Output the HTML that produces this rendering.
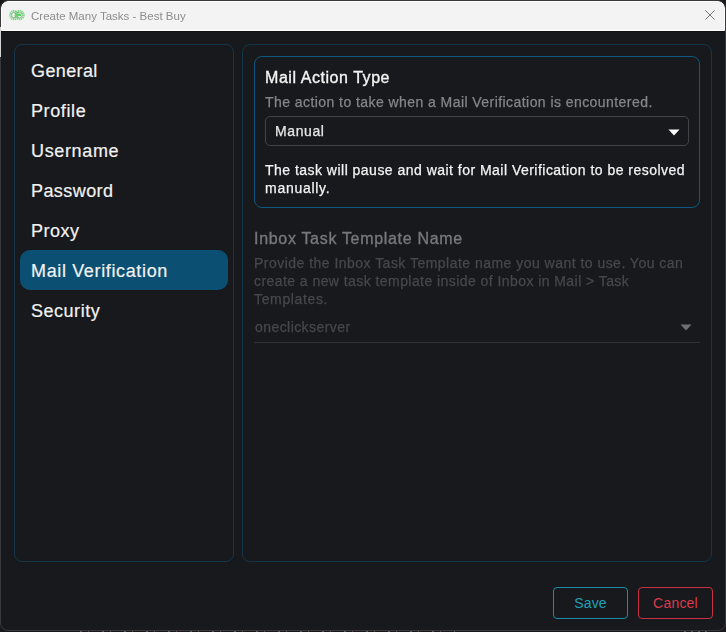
<!DOCTYPE html>
<html><head><meta charset="utf-8"><title>Create Many Tasks - Best Buy</title>
<style>
*{box-sizing:border-box;margin:0;padding:0}
html,body{width:726px;height:632px;overflow:hidden;background:#19191b;font-family:"Liberation Sans",sans-serif;}
.abs{position:absolute;white-space:nowrap}
#win{position:absolute;left:0;top:0;width:726px;height:631px;border:1px solid #39393b;border-radius:8px;background:#18191c;overflow:hidden}
#tb{position:absolute;left:0;top:0;width:724px;height:30px;background:#f3f3f3;border:1px solid #fff;border-radius:7px 7px 0 0}
#title{left:30px;top:8px;font-size:11.5px;line-height:14px;color:#8d8d8d;will-change:transform}
#side{position:absolute;left:13px;top:43px;width:220px;height:518px;border:1px solid #143649;border-radius:8px}
#main{position:absolute;left:241px;top:43px;width:470px;height:518px;border:1px solid #143649;border-radius:8px}
.nav{position:absolute;left:30px;font-size:18px;line-height:22px;color:#f2f2f2;white-space:nowrap;-webkit-text-stroke:0.2px currentColor}
#sel{position:absolute;left:19px;top:249px;width:208px;height:40px;border-radius:10px;background:#0b4f73}
#card{position:absolute;left:253px;top:55px;width:446px;height:152px;border:1px solid #0f5780;border-radius:8px}
.h{font-size:16px;line-height:20px;will-change:transform;-webkit-text-stroke:0.35px currentColor}
.t{font-size:14px;line-height:18px;will-change:transform;-webkit-text-stroke:0.25px currentColor}
#selbox{position:absolute;left:264px;top:115px;width:424px;height:30px;border:1px solid #42444a;border-radius:5px}
.btn{position:absolute;top:586px;width:75px;height:32px;border-radius:4px;font-size:14px;line-height:30px;text-align:center}
#save{left:552px;border:1px solid #1c8ba3;color:#1fa0bb}
#cancel{left:637px;border:1px solid #c93045;color:#dc3a4e}
</style></head><body>
<div id="win">
 <div id="tb"></div>
 <div class="abs" style="left:0;top:30px;width:724px;height:1px;background:#0f1012"></div>
 <svg class="abs" style="left:7.4px;top:7.2px" width="20" height="16" viewBox="0 0 20 16"><g fill="none"><ellipse cx="5.8" cy="7.1" rx="3.5" ry="4.1" stroke="#62d46c" stroke-width="2.3" stroke-dasharray="1.3 0.55" opacity="0.8"/><ellipse cx="11.6" cy="7.1" rx="4" ry="4.1" stroke="#62d46c" stroke-width="2.3" stroke-dasharray="1.3 0.55" opacity="0.8"/><ellipse cx="5.8" cy="7.1" rx="2.2" ry="2.7" stroke="#6b8f70" stroke-width="1" opacity="0.6"/><ellipse cx="11.5" cy="7.1" rx="2.7" ry="2.8" stroke="#6b8f70" stroke-width="1" opacity="0.6"/></g><ellipse cx="11.4" cy="6.9" rx="1.7" ry="1.3" fill="#4fd65c"/><circle cx="8.4" cy="6.9" r="1" fill="#7fcf86" opacity="0.8"/></svg>
 <div id="title" class="abs" style="letter-spacing:0.009px">Create Many Tasks - Best Buy</div>
 <svg class="abs" style="left:704px;top:9px" width="10" height="10" viewBox="0 0 10 10"><path d="M0.4 0.4L9.6 9.6M9.6 0.4L0.4 9.6" stroke="#777" stroke-width="1" fill="none"/></svg>

 <div id="side"></div>
 <div id="main"></div>
 <div id="sel"></div>
 <div class="nav" id="n1" style="top:59px;letter-spacing:0.376px">General</div>
 <div class="nav" id="n2" style="top:99px;letter-spacing:0.611px">Profile</div>
 <div class="nav" id="n3" style="top:139px;letter-spacing:0.653px">Username</div>
 <div class="nav" id="n4" style="top:179px;letter-spacing:0.424px">Password</div>
 <div class="nav" id="n5" style="top:219px;letter-spacing:0.496px">Proxy</div>
 <div class="nav" id="n6" style="top:259px;letter-spacing:0.64px">Mail Verification</div>
 <div class="nav" id="n7" style="top:299px;letter-spacing:0.524px">Security</div>

 <div id="card"></div>
 <div class="abs h" id="h1" style="left:264px;top:67px;color:#f4f4f4;letter-spacing:0.552px">Mail Action Type</div>
 <div class="abs t" id="d1" style="left:264px;top:92px;color:#858688;letter-spacing:0.438px">The action to take when a Mail Verification is encountered.</div>
 <div id="selbox"></div>
 <div class="abs t" id="manual" style="left:274px;top:121px;color:#e8e8e8;letter-spacing:0.596px">Manual</div>
 <svg class="abs" style="left:667px;top:127.5px" width="12" height="7" viewBox="0 0 12 7"><path d="M0.5 0.5H11.5L6 6.5Z" fill="#fff"/></svg>
 <div class="abs t" id="p1" style="left:264px;top:160px;color:#f4f4f4;letter-spacing:0.477px">The task will pause and wait for Mail Verification to be resolved</div>
 <div class="abs t" id="p2" style="left:264px;top:178px;color:#f4f4f4;letter-spacing:0.714px">manually.</div>

 <div class="abs h" id="h2" style="left:253px;top:228px;color:#77787a;letter-spacing:0.687px">Inbox Task Template Name</div>
 <div class="abs t" id="q1" style="left:253px;top:253px;color:#47484b;letter-spacing:0.475px">Provide the Inbox Task Template name you want to use. You can</div>
 <div class="abs t" id="q2" style="left:253px;top:271px;color:#47484b;letter-spacing:0.437px">create a new task template inside of Inbox in Mail &gt; Task</div>
 <div class="abs t" id="q3" style="left:253px;top:289px;color:#47484b;letter-spacing:0.644px">Templates.</div>
 <div class="abs t" id="ocs" style="left:254px;top:317px;color:#47484b;letter-spacing:0.432px">oneclickserver</div>
 <svg class="abs" style="left:679px;top:323px" width="12" height="7" viewBox="0 0 12 7"><path d="M0.5 0.5H11.5L6 6.5Z" fill="#6f7072"/></svg>
 <div class="abs" style="left:253px;top:341px;width:446px;height:1px;background:#2f3135"></div>

 <div class="btn" id="save" style="letter-spacing:0.159px">Save</div>
 <div class="btn" id="cancel" style="letter-spacing:0.201px">Cancel</div>
</div>
<div style="position:absolute;left:75px;top:631px;width:380px;height:1px;opacity:.4;background:repeating-linear-gradient(90deg,transparent 0 5px,#9bb 5px 7px,transparent 7px 13px,#b88 13px 14px,transparent 14px 22px)"></div>
<div style="position:absolute;left:684px;top:631px;width:26px;height:1px;opacity:.4;background:repeating-linear-gradient(90deg,#aaa 0 2px,transparent 2px 7px)"></div>
<div style="position:absolute;left:0;top:27px;width:1px;height:30px;background:#d4d4d4"></div>
</body></html>
